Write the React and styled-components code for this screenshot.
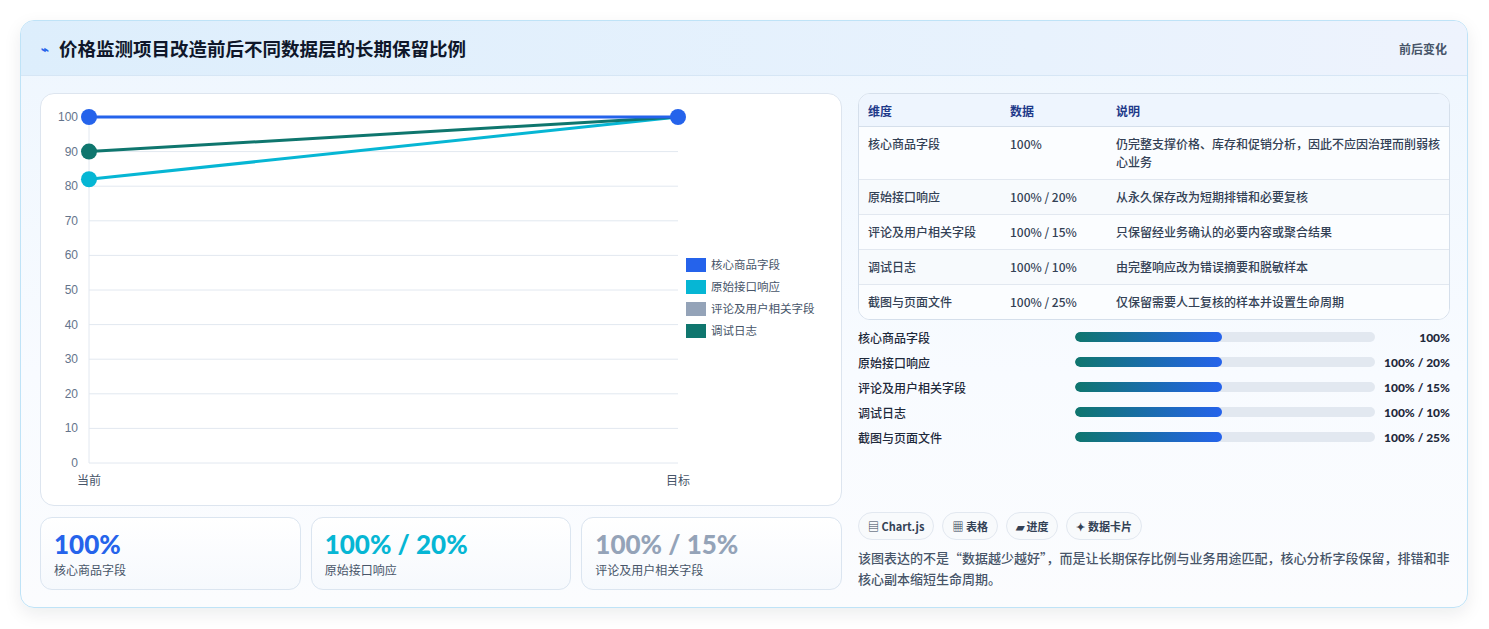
import React from "react";
import styled, { createGlobalStyle } from "styled-components";

const Global = createGlobalStyle`
  body { margin: 0; background: #fff; font-family: "Noto Sans CJK SC", "Noto Sans", sans-serif; }
`;

const Page = styled.div`
  padding: 20px 21px 20px 20px;
`;

const Card = styled.div`
  border: 1px solid #bfe3f7;
  border-radius: 14px;
  background: linear-gradient(180deg, #eef6fe 0%, #f8fbff 60%, #fbfcfe 100%);
  box-shadow: 0 6px 18px rgba(15, 23, 42, 0.08);
  overflow: hidden;
`;

const Header = styled.div`
  height: 54px;
  display: flex;
  align-items: center;
  justify-content: space-between;
  padding: 0 20px 0 20px;
  background: linear-gradient(90deg, #ddeefc, #e8f2fd 70%, #eef3fd);
  border-bottom: 1px solid #d6e6f5;
`;

const Title = styled.h1`
  margin: 0;
  font-size: 18.5px;
  font-weight: 700;
  color: #0f172a;
  display: flex;
  align-items: center;
  gap: 10px;
`;

const Bolt = styled.span`
  color: #2563eb;
  font-size: 13px;
`;

const Tag = styled.span`
  font-size: 12px;
  font-weight: 700;
  color: #475569;
`;

const Body = styled.div`
  display: grid;
  grid-template-columns: 802px 592px;
  gap: 16px;
  padding: 17px 19px 17px 19px;
`;

const Col = styled.div`
  display: flex;
  flex-direction: column;
`;

const ChartBox = styled.div`
  height: 411px;
  border: 1px solid #dde5ef;
  border-radius: 14px;
  background: #fff;
`;

const Stats = styled.div`
  display: grid;
  grid-template-columns: repeat(3, 1fr);
  gap: 10px;
  margin-top: 11px;
`;

const Stat = styled.div`
  height: 73px;
  box-sizing: border-box;
  border: 1px solid #dbe5f0;
  border-radius: 12px;
  background: linear-gradient(180deg, #fff, #f6f9fd);
  padding: 10px 13px;
`;

const StatValue = styled.div`
  font-family: "Lato", "Noto Sans", sans-serif;
  font-size: 26px;
  font-weight: 900;
  line-height: 32px;
  color: ${(p) => p.color};
`;

const StatLabel = styled.div`
  font-size: 12px;
  color: #475569;
  margin-top: 1px;
`;

const Table = styled.table`
  width: 100%;
  border-collapse: separate;
  border-spacing: 0;
  border: 1px solid #d5dfeb;
  border-radius: 12px;
  overflow: hidden;
  font-size: 12px;
  color: #334155;
  background: #fff;
`;

const Th = styled.th`
  text-align: left;
  font-weight: 700;
  color: #1e3a8a;
  background: #eef5fe;
  height: 32px;
  padding: 0 9px;
  border-bottom: 1px solid #d5dfeb;
`;

const Td = styled.td`
  padding: 8px 9px;
  vertical-align: top;
  line-height: 18px;
  font-weight: 500;
  background: ${(p) => (p.odd ? "#f7fafd" : "#fbfdff")};
  border-top: ${(p) => (p.first ? "none" : "1px solid #e2e8f0")};
`;

const Bars = styled.div`
  display: flex;
  flex-direction: column;
  gap: 7px;
  margin-top: 8px;
`;

const BarRow = styled.div`
  display: grid;
  grid-template-columns: 217px 300px 1fr;
  align-items: center;
  height: 18px;
  font-size: 12px;
  color: #1e293b;
  font-weight: 500;
`;

const Track = styled.div`
  height: 10px;
  border-radius: 5px;
  background: #e2e8f0;
  overflow: hidden;
`;

const Fill = styled.div`
  height: 100%;
  border-radius: 5px;
  background: linear-gradient(90deg, #0f766e, #2563eb);
`;

const BarValue = styled.div`
  text-align: right;
  font-family: "Lato", sans-serif;
  font-weight: 900;
`;

const Chips = styled.div`
  display: flex;
  gap: 8px;
  margin-top: 66px;
`;

const Chip = styled.span`
  height: 28px;
  box-sizing: border-box;
  border: 1px solid #e2e8f0;
  border-radius: 14px;
  background: #f8fafc;
  padding: 0 9px;
  display: inline-flex;
  align-items: center;
  gap: 3px;
  font-size: 11px;
  font-weight: 700;
  color: #334155;
`;

const Note = styled.p`
  margin: 7px 0 0;
  font-size: 13px;
  line-height: 21px;
  color: #475569;
  font-weight: 500;
`;

const series = [
  { name: "核心商品字段", color: "#2563eb", from: 100 },
  { name: "原始接口响应", color: "#06b6d4", from: 82 },
  { name: "评论及用户相关字段", color: "#94a3b8", from: 100 },
  { name: "调试日志", color: "#0f766e", from: 90 },
];

const rows = [
  ["核心商品字段", "100%", "仍完整支撑价格、库存和促销分析，因此不应因治理而削弱核心业务"],
  ["原始接口响应", "100% / 20%", "从永久保存改为短期排错和必要复核"],
  ["评论及用户相关字段", "100% / 15%", "只保留经业务确认的必要内容或聚合结果"],
  ["调试日志", "100% / 10%", "由完整响应改为错误摘要和脱敏样本"],
  ["截图与页面文件", "100% / 25%", "仅保留需要人工复核的样本并设置生命周期"],
];

const Chart = () => {
  const x0 = 48, x1 = 637, top = 23, bottom = 369;
  const y = (v) => bottom - ((bottom - top) * v) / 100;
  const ticks = [0, 10, 20, 30, 40, 50, 60, 70, 80, 90, 100];
  const order = [series[1], series[3], series[0]];
  return (
    <svg width="800" height="409" style={{ display: "block" }}>
      {ticks.map((t) => (
        <g key={t}>
          <line x1={x0} x2={x1} y1={y(t)} y2={y(t)} stroke="#e2e8f0" />
          <text x={x0 - 11} y={y(t) + 4} textAnchor="end" fontSize="12" fill="#64748b" fontFamily="Liberation Sans">{t}</text>
        </g>
      ))}
      <line x1={x0} x2={x0} y1={top} y2={bottom} stroke="#e2e8f0" />
      <text x={x0} y={391} textAnchor="middle" fontSize="12" fill="#475569">当前</text>
      <text x={x1} y={391} textAnchor="middle" fontSize="12" fill="#475569">目标</text>
      {order.map((s) => (
        <g key={s.name}>
          <line x1={x0} y1={y(s.from)} x2={x1} y2={y(100)} stroke={s.color} strokeWidth="3" />
          <circle cx={x0} cy={y(s.from)} r="8" fill={s.color} />
        </g>
      ))}
      <circle cx={x1} cy={y(100)} r="8" fill="#2563eb" />
      {series.map((s, i) => (
        <g key={s.name} transform={`translate(645, ${164 + i * 22})`}>
          <rect width="20" height="14" fill={s.color} />
          <text x="25" y="11" fontSize="11.5" fill="#475569">{s.name}</text>
        </g>
      ))}
    </svg>
  );
};

export default function App() {
  return (
    <Page>
      <Global />
      <Card>
        <Header>
          <Title><Bolt>⌁</Bolt>价格监测项目改造前后不同数据层的长期保留比例</Title>
          <Tag>前后变化</Tag>
        </Header>
        <Body>
          <Col>
            <ChartBox><Chart /></ChartBox>
            <Stats>
              <Stat><StatValue color="#2563eb">100%</StatValue><StatLabel>核心商品字段</StatLabel></Stat>
              <Stat><StatValue color="#06b6d4">100% / 20%</StatValue><StatLabel>原始接口响应</StatLabel></Stat>
              <Stat><StatValue color="#94a3b8">100% / 15%</StatValue><StatLabel>评论及用户相关字段</StatLabel></Stat>
            </Stats>
          </Col>
          <Col>
            <Table>
              <thead>
                <tr>
                  <Th style={{ width: 124 }}>维度</Th>
                  <Th style={{ width: 88 }}>数据</Th>
                  <Th>说明</Th>
                </tr>
              </thead>
              <tbody>
                {rows.map((r, i) => (
                  <tr key={r[0]}>
                    {r.map((c, j) => (
                      <Td key={j} odd={i % 2 === 1} first={i === 0}>{c}</Td>
                    ))}
                  </tr>
                ))}
              </tbody>
            </Table>
            <Bars>
              {rows.map((r) => (
                <BarRow key={r[0]}>
                  <span>{r[0]}</span>
                  <Track><Fill style={{ width: "49%" }} /></Track>
                  <BarValue>{r[1]}</BarValue>
                </BarRow>
              ))}
            </Bars>
            <Chips>
              <Chip>▤ Chart.js</Chip>
              <Chip>▦ 表格</Chip>
              <Chip>▰ 进度</Chip>
              <Chip>✦ 数据卡片</Chip>
            </Chips>
            <Note>该图表达的不是“数据越少越好”，而是让长期保存比例与业务用途匹配，核心分析字段保留，排错和非核心副本缩短生命周期。</Note>
          </Col>
        </Body>
      </Card>
    </Page>
  );
}
